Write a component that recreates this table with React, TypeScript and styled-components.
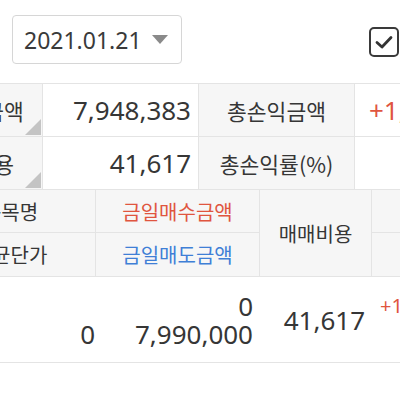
import styled, { createGlobalStyle } from "styled-components";

const GlobalStyle = createGlobalStyle`
    html, body {
        margin: 0;
        padding: 0;
        background: #ffffff;
    }
    body {
        font-family: "Noto Sans", "Noto Sans CJK KR", sans-serif;
        color: #363636;
        overflow: hidden;
    }
`

const RED = "#e0553f";
const BLUE = "#3f7fd6";
const LINE = "#e4e4e4";
const HEAD = "#f6f6f6";
const KR = `"Noto Sans CJK KR", "Noto Sans", sans-serif`;

export default function App() {
    return (
        <>
            <GlobalStyle />
            <Page>
                <TopBar>
                    <DateSelect>
                        <span>2021.01.21</span>
                        <Caret />
                    </DateSelect>
                    <CheckBox>
                        <svg width="20" height="16" viewBox="0 0 20 16">
                            <path d="M3 8.5 L8 13 L17 3.5" fill="none" stroke="#333" strokeWidth="2.8" strokeLinecap="round" strokeLinejoin="round" />
                        </svg>
                    </CheckBox>
                </TopBar>

                <Clip>
                    <SummaryGrid>
                        <Label $corner>매도정산금액</Label>
                        <Value>7,948,383</Value>
                        <Label>총손익금액</Label>
                        <Value $left $color={RED}>+1,254,120</Value>

                        <Label $corner>총매매비용</Label>
                        <Value>41,617</Value>
                        <Label>총손익률(%)</Label>
                        <Value $left $color={RED}></Value>
                    </SummaryGrid>
                </Clip>

                <Clip>
                    <DetailGrid>
                        <Head>종목명</Head>
                        <Head $color={RED}>금일매수금액</Head>
                        <Head $span>매매비용</Head>
                        <Head>평가손익</Head>
                        <Head>평균단가</Head>
                        <Head $color={BLUE}>금일매도금액</Head>
                        <Head>수익률</Head>

                        <Cell $pad={1}>
                            <Line />
                            <Line>0</Line>
                        </Cell>
                        <Cell>
                            <Line>0</Line>
                            <Line>7,990,000</Line>
                        </Cell>
                        <Cell>
                            <Line>41,617</Line>
                        </Cell>
                        <Cell $left>
                            <Line $small $color={RED}>+1,254,120</Line>
                            <Line />
                        </Cell>
                    </DetailGrid>
                </Clip>
            </Page>
        </>
    )
}

const Page = styled.div`
    width: 400px;
    height: 400px;
    overflow: hidden;
`

const TopBar = styled.div`
    height: 83px;
    display: flex;
    align-items: center;
    justify-content: space-between;
    padding: 0 1px 0 12px;
    box-sizing: border-box;
`

const DateSelect = styled.div`
    width: 170px;
    height: 49px;
    box-sizing: border-box;
    border: 1.5px solid #d6d6d6;
    border-radius: 4px;
    display: flex;
    align-items: center;
    justify-content: space-between;
    padding: 0 13px 0 11px;
    font-size: 23px;
    color: #3a3a3a;
    margin-top: -4px;
`

const Caret = styled.i`
    width: 0;
    height: 0;
    border-left: 8.5px solid transparent;
    border-right: 8.5px solid transparent;
    border-top: 9px solid #8a8a8a;
`

const CheckBox = styled.div`
    width: 30px;
    height: 30px;
    box-sizing: border-box;
    border: 2.5px solid #3a3a3a;
    border-radius: 5px;
    display: flex;
    align-items: center;
    justify-content: center;
`

const Clip = styled.div`
    width: 400px;
    overflow: hidden;
`

const SummaryGrid = styled.div`
    display: grid;
    grid-template-columns: 156px 156px 156px 156px;
    grid-auto-rows: 53px;
    margin-left: -113px;
    width: 624px;
    border-top: 1px solid ${LINE};
`

const Label = styled.div<{ $corner?: boolean }>`
    position: relative;
    background: ${HEAD};
    border-right: 1px solid ${LINE};
    border-bottom: 1px solid ${LINE};
    display: flex;
    align-items: center;
    justify-content: center;
    font-family: ${KR};
    font-size: 21.5px;
    white-space: nowrap;

    &::after {
        content: "";
        display: ${p => (p.$corner ? "block" : "none")};
        position: absolute;
        right: 1px;
        bottom: 1px;
        width: 0;
        height: 0;
        border-left: 16px solid transparent;
        border-bottom: 16px solid #c4c4c4;
    }
`

const Value = styled.div<{ $left?: boolean; $color?: string }>`
    background: #ffffff;
    border-right: 1px solid ${LINE};
    border-bottom: 1px solid ${LINE};
    display: flex;
    align-items: center;
    justify-content: ${p => (p.$left ? "flex-start" : "flex-end")};
    padding: ${p => (p.$left ? "0 0 0 14px" : "0 7px 0 0")};
    font-size: 26px;
    color: ${p => p.$color || "#363636"};
    white-space: nowrap;
    overflow: hidden;
`

const DetailGrid = styled.div`
    display: grid;
    grid-template-columns: 170px 164px 112px 160px;
    grid-template-rows: 43px 44px 86px;
    margin-left: -74px;
    width: 606px;
`

const Head = styled.div<{ $color?: string; $span?: boolean }>`
    grid-row: ${p => (p.$span ? "span 2" : "auto")};
    background: ${HEAD};
    border-right: 1px solid ${LINE};
    border-bottom: 1px solid ${LINE};
    display: flex;
    align-items: center;
    justify-content: center;
    font-family: ${KR};
    font-size: 20px;
    color: ${p => p.$color || "#363636"};
    white-space: nowrap;
`

const Cell = styled.div<{ $left?: boolean; $pad?: number }>`
    border-bottom: 1px solid ${LINE};
    display: flex;
    flex-direction: column;
    justify-content: center;
    align-items: ${p => (p.$left ? "flex-start" : "flex-end")};
    padding: ${p => (p.$left ? "0 0 0 8px" : `0 ${p.$pad ?? 7}px 0 0`)};
    overflow: hidden;
    white-space: nowrap;
`

const Line = styled.div<{ $small?: boolean; $color?: string }>`
    height: 28px;
    line-height: 28px;
    font-size: ${p => (p.$small ? "20px" : "26px")};
    color: ${p => p.$color || "#363636"};
`
